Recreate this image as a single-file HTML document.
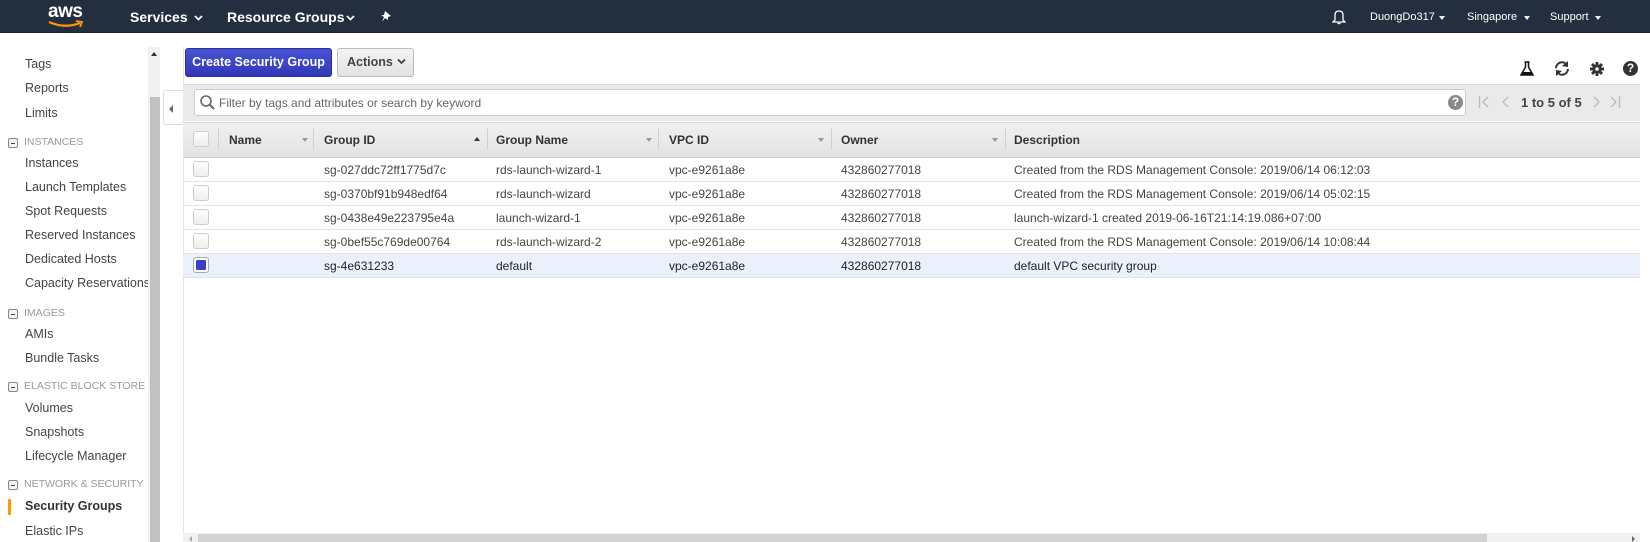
<!DOCTYPE html>
<html><head><meta charset="utf-8"><style>
*{margin:0;padding:0;box-sizing:border-box}
body{width:1650px;height:542px;overflow:hidden;background:#fff;font-family:"Liberation Sans",sans-serif;font-size:13px;color:#444;position:relative}
.a{position:absolute;white-space:nowrap}
svg{display:block}
#hdr{position:absolute;left:0;top:0;width:1650px;height:33px;background:#232f3e;border-bottom:1px solid #1a232e}
.hw{color:#fff;font-weight:bold;font-size:14px;top:9px}
.hn{color:#fff;font-size:11px;top:11px}
.car{width:0;height:0;border-left:3.5px solid transparent;border-right:3.5px solid transparent;border-top:4px solid #fff}
.sb{left:25px;font-size:12.5px;color:#444}
.sh{left:24px;font-size:10.5px;color:#999}
.mi{left:8px;width:10px;height:10px;border:1px solid #888;border-radius:2px;background:#f4f4f4}
.mi:after{content:"";position:absolute;left:2px;top:3.5px;width:4px;height:1.5px;background:#444}
.th{font-weight:bold;font-size:12px;color:#333;top:133px}
.sep{top:128px;width:1px;height:22px;background:#d0d0d0}
.dc{width:0;height:0;border-left:3px solid transparent;border-right:3px solid transparent;border-top:4px solid #999;top:138px}
.row{position:absolute;left:183px;width:1457px;height:24px;border-bottom:1px solid #e4e4e4}
.cb{position:absolute;left:10px;top:3px;width:16px;height:16px;border:1px solid #ccc;border-radius:3px;background:linear-gradient(#fff,#eee)}
.c{position:absolute;top:5px;font-size:12px;color:#444}
</style></head><body>
<div id="hdr">
 <div class="a" style="left:48px;top:1px;color:#fff;font-size:19px;font-weight:bold;letter-spacing:-0.5px">aws</div>
 <svg class="a" style="left:47px;top:20px" width="38" height="9"><path d="M2 2 Q18 9 33 3" stroke="#f90" stroke-width="2.2" fill="none"/><path d="M29 1 L35 2 L33 7" stroke="#f90" stroke-width="1.8" fill="none"/></svg>
 <div class="a hw" style="left:130px">Services</div><svg class="a" style="left:194px;top:15px" width="9" height="6"><path d="M1 1 L4.5 4.5 L8 1" stroke="#fff" stroke-width="1.8" fill="none"/></svg>
 <div class="a hw" style="left:227px">Resource Groups</div><svg class="a" style="left:346px;top:15px" width="9" height="6"><path d="M1 1 L4.5 4.5 L8 1" stroke="#fff" stroke-width="1.8" fill="none"/></svg>
 <svg class="a" style="left:380px;top:10px" width="13" height="14"><path d="M5 1 L11 6 L8 7 L8 10 L5 8 L2 12 L4 7 L1 5 L4 5 Z" fill="#fff"/></svg>
 <svg class="a" style="left:1332px;top:9px" width="14" height="16"><path d="M3 11 L3 6 Q3 2 7 2 Q11 2 11 6 L11 11 L13 13 L1 13 Z" stroke="#fff" stroke-width="1.3" fill="none"/><path d="M5.5 14.5 L8.5 14.5" stroke="#fff" stroke-width="1.3"/></svg>
 <div class="a hn" style="left:1370px">DuongDo317</div><div class="a car" style="left:1439px;top:16px"></div>
 <div class="a hn" style="left:1467px">Singapore</div><div class="a car" style="left:1524px;top:16px"></div>
 <div class="a hn" style="left:1550px">Support</div><div class="a car" style="left:1595px;top:16px"></div>
</div>
<!-- sidebar -->
<div class="a sb" style="top:57px">Tags</div>
<div class="a sb" style="top:81px">Reports</div>
<div class="a sb" style="top:106px">Limits</div>
<div class="a mi" style="top:138px"></div><div class="a sh" style="top:136px">INSTANCES</div>
<div class="a sb" style="top:156px">Instances</div>
<div class="a sb" style="top:180px">Launch Templates</div>
<div class="a sb" style="top:204px">Spot Requests</div>
<div class="a sb" style="top:228px">Reserved Instances</div>
<div class="a sb" style="top:252px">Dedicated Hosts</div>
<div class="a sb" style="top:276px">Capacity Reservations</div>
<div class="a mi" style="top:309px"></div><div class="a sh" style="top:307px">IMAGES</div>
<div class="a sb" style="top:327px">AMIs</div>
<div class="a sb" style="top:351px">Bundle Tasks</div>
<div class="a mi" style="top:382px"></div><div class="a sh" style="top:380px">ELASTIC BLOCK STORE</div>
<div class="a sb" style="top:401px">Volumes</div>
<div class="a sb" style="top:425px">Snapshots</div>
<div class="a sb" style="top:449px">Lifecycle Manager</div>
<div class="a mi" style="top:480px"></div><div class="a sh" style="top:478px">NETWORK &amp; SECURITY</div>
<div class="a" style="left:8px;top:499px;width:3px;height:16px;background:#f90;border-radius:1px"></div>
<div class="a sb" style="top:499px;font-weight:bold;color:#333">Security Groups</div>
<div class="a sb" style="top:524px">Elastic IPs</div>
<div class="a" style="left:148px;top:47px;width:12px;height:495px;background:#f1f1f1"></div>
<div class="a" style="left:151px;top:52px;width:0;height:0;border-left:3px solid transparent;border-right:3px solid transparent;border-bottom:4px solid #333"></div>
<div class="a" style="left:150px;top:97px;width:10px;height:445px;background:#c1c1c1"></div>
<div class="a" style="left:163px;top:90px;width:21px;height:35px;background:#fff;border:1px solid #ddd;border-right:none;border-radius:3px 0 0 3px"></div>
<div class="a" style="left:169px;top:105px;width:0;height:0;border-top:4px solid transparent;border-bottom:4px solid transparent;border-right:4px solid #666"></div>
<div class="a" style="left:183px;top:47px;width:1px;height:495px;background:#e4e4e4"></div>
<!-- buttons -->
<div class="a" style="left:185px;top:48px;width:147px;height:29px;background:linear-gradient(#4754d4,#3138b8);border:1px solid #2b2f9a;border-radius:3px;color:#fff;font-weight:bold;font-size:12.5px;line-height:27px;text-align:center">Create Security Group</div>
<div class="a" style="left:337px;top:48px;width:77px;height:29px;background:linear-gradient(#f4f4f4,#e2e2e2);border:1px solid #bbb;border-radius:3px;color:#444;font-weight:bold;font-size:12.5px;line-height:27px;padding-left:9px">Actions</div>
<svg class="a" style="left:397px;top:58px" width="9" height="7"><path d="M1 1.5 L4.5 5 L8 1.5" stroke="#444" stroke-width="1.8" fill="none"/></svg>
<!-- top icons -->
<svg class="a" style="left:1520px;top:61px" width="14" height="15"><path d="M4.5 1 L9.5 1 M5.5 1 L5.5 6 L1 14 L13 14 L8.5 6 L8.5 1" stroke="#111" stroke-width="1.5" fill="none"/><path d="M3 11 L11 11 L13 14 L1 14Z" fill="#111"/></svg>
<svg class="a" style="left:1553px;top:60px" width="18" height="17"><path d="M3 8 A6 6 0 0 1 14 5" stroke="#333" stroke-width="2" fill="none"/><path d="M15 1 L15 7 L9 6Z" fill="#333"/><path d="M15 9 A6 6 0 0 1 4 12" stroke="#333" stroke-width="2" fill="none"/><path d="M3 16 L3 10 L9 11Z" fill="#333"/></svg>
<svg class="a" style="left:1590px;top:62px" width="14" height="14"><g fill="#333"><circle cx="7" cy="7" r="4.5"/><rect x="5.5" y="0" width="3" height="14"/><rect x="0" y="5.5" width="14" height="3"/><rect x="5.5" y="0" width="3" height="14" transform="rotate(45 7 7)"/><rect x="5.5" y="0" width="3" height="14" transform="rotate(-45 7 7)"/></g><circle cx="7" cy="7" r="1.8" fill="#fff"/></svg>
<div class="a" style="left:1623px;top:61px;width:15px;height:15px;border-radius:50%;background:#333;color:#fff;font-weight:bold;font-size:12px;line-height:15px;text-align:center">?</div>
<!-- filter bar -->
<div class="a" style="left:183px;top:84px;width:1457px;height:37px;background:#eaeaea;border-top:1px solid #ddd"></div>
<div class="a" style="left:194px;top:89px;width:1272px;height:27px;background:#fff;border:1px solid #ccc;border-radius:3px"></div>
<svg class="a" style="left:199px;top:94px" width="17" height="17"><circle cx="7" cy="7" r="5" stroke="#666" stroke-width="1.6" fill="none"/><path d="M10.5 10.5 L15 15" stroke="#666" stroke-width="2"/></svg>
<div class="a" style="left:219px;top:96px;font-size:12px;color:#666">Filter by tags and attributes or search by keyword</div>
<div class="a" style="left:1448px;top:95px;width:15px;height:15px;border-radius:50%;background:#888;color:#fff;font-weight:bold;font-size:12px;line-height:15px;text-align:center">?</div>
<svg class="a" style="left:1478px;top:95px" width="12" height="14"><path d="M1.5 1 L1.5 13 M10 2 L5 7 L10 12" stroke="#bbb" stroke-width="1.3" fill="none"/></svg>
<svg class="a" style="left:1500px;top:95px" width="10" height="14"><path d="M8 2 L3 7 L8 12" stroke="#bbb" stroke-width="1.3" fill="none"/></svg>
<div class="a" style="left:1521px;top:95px;font-weight:bold;color:#444;font-size:13px">1 to 5 of 5</div>
<svg class="a" style="left:1592px;top:95px" width="10" height="14"><path d="M2 2 L7 7 L2 12" stroke="#bbb" stroke-width="1.3" fill="none"/></svg>
<svg class="a" style="left:1609px;top:95px" width="12" height="14"><path d="M10.5 1 L10.5 13 M2 2 L7 7 L2 12" stroke="#bbb" stroke-width="1.3" fill="none"/></svg>
<!-- header row -->
<div class="a" style="left:183px;top:122px;width:1457px;height:36px;background:linear-gradient(#f0f0f0,#e3e3e3);border-top:1px solid #d5d5d5;border-bottom:1px solid #cfcfcf"></div>
<div class="a" style="left:193px;top:131px;width:16px;height:16px;border:1px solid #ccc;border-radius:3px;background:linear-gradient(#fff,#eee)"></div>
<div class="a sep" style="left:218px"></div><div class="a th" style="left:229px">Name</div><div class="a dc" style="left:302px"></div>
<div class="a sep" style="left:313px"></div><div class="a th" style="left:324px">Group ID</div><div class="a" style="left:474px;top:137px;border-left:3.5px solid transparent;border-right:3.5px solid transparent;border-bottom:4px solid #333"></div>
<div class="a sep" style="left:487px"></div><div class="a th" style="left:496px">Group Name</div><div class="a dc" style="left:646px"></div>
<div class="a sep" style="left:658px"></div><div class="a th" style="left:669px">VPC ID</div><div class="a dc" style="left:818px"></div>
<div class="a sep" style="left:831px"></div><div class="a th" style="left:841px">Owner</div><div class="a dc" style="left:992px"></div>
<div class="a sep" style="left:1005px"></div><div class="a th" style="left:1014px">Description</div>
<!-- rows -->
<div class="row" style="top:158px"><div class="cb"></div><div class="c" style="left:141px">sg-027ddc72ff1775d7c</div><div class="c" style="left:313px">rds-launch-wizard-1</div><div class="c" style="left:486px">vpc-e9261a8e</div><div class="c" style="left:658px">432860277018</div><div class="c" style="left:831px">Created from the RDS Management Console: 2019/06/14 06:12:03</div></div>
<div class="row" style="top:182px"><div class="cb"></div><div class="c" style="left:141px">sg-0370bf91b948edf64</div><div class="c" style="left:313px">rds-launch-wizard</div><div class="c" style="left:486px">vpc-e9261a8e</div><div class="c" style="left:658px">432860277018</div><div class="c" style="left:831px">Created from the RDS Management Console: 2019/06/14 05:02:15</div></div>
<div class="row" style="top:206px"><div class="cb"></div><div class="c" style="left:141px">sg-0438e49e223795e4a</div><div class="c" style="left:313px">launch-wizard-1</div><div class="c" style="left:486px">vpc-e9261a8e</div><div class="c" style="left:658px">432860277018</div><div class="c" style="left:831px">launch-wizard-1 created 2019-06-16T21:14:19.086+07:00</div></div>
<div class="row" style="top:230px"><div class="cb"></div><div class="c" style="left:141px">sg-0bef55c769de00764</div><div class="c" style="left:313px">rds-launch-wizard-2</div><div class="c" style="left:486px">vpc-e9261a8e</div><div class="c" style="left:658px">432860277018</div><div class="c" style="left:831px">Created from the RDS Management Console: 2019/06/14 10:08:44</div></div>
<div class="row" style="top:254px;background:#eaf0fc;border-bottom-color:#dde4f2"><div class="cb" style="background:#fff;border-color:#aaa"><div style="position:absolute;left:2px;top:2px;width:10px;height:10px;background:#3a3fc4;border-radius:1px"></div></div><div class="c" style="left:141px;color:#222">sg-4e631233</div><div class="c" style="left:313px;color:#222">default</div><div class="c" style="left:486px;color:#222">vpc-e9261a8e</div><div class="c" style="left:658px;color:#222">432860277018</div><div class="c" style="left:831px;color:#222">default VPC security group</div></div>
<!-- bottom scrollbar -->
<div class="a" style="left:183px;top:533px;width:1457px;height:9px;background:#f1f1f1"></div>
<div class="a" style="left:198px;top:534px;width:1289px;height:8px;background:#d2d2d2"></div>
<div class="a" style="left:189px;top:536px;border-top:3px solid transparent;border-bottom:3px solid transparent;border-right:3px solid #aaa"></div>
<div class="a" style="left:1632px;top:536px;border-top:3px solid transparent;border-bottom:3px solid transparent;border-left:3px solid #666"></div>
</body></html>
